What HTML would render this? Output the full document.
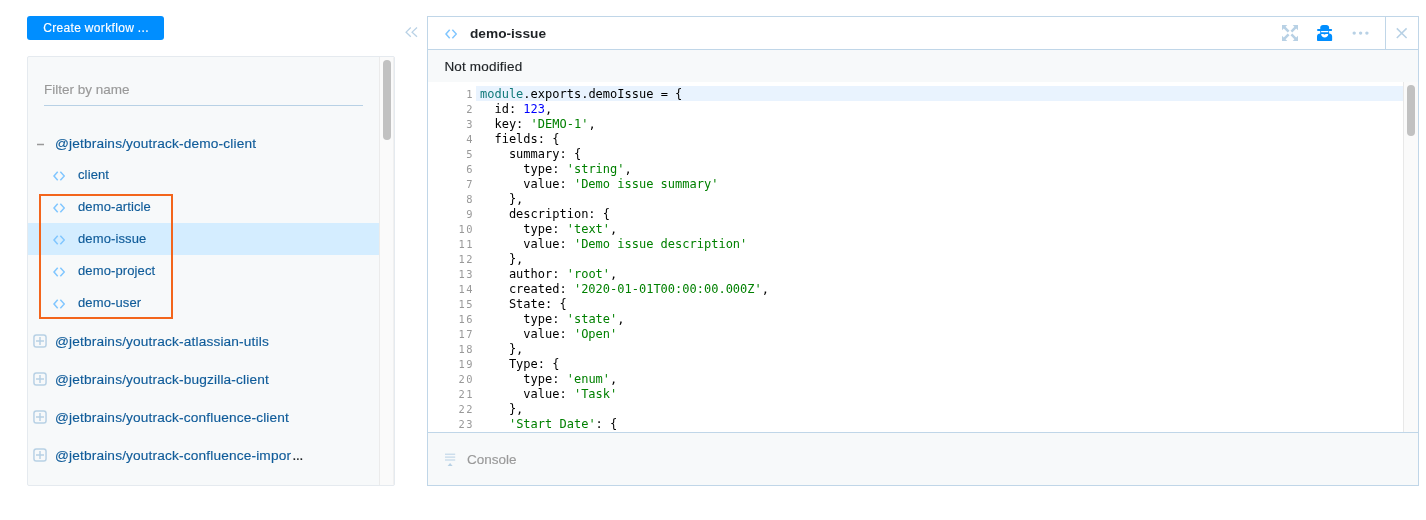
<!DOCTYPE html>
<html lang="en">
<head>
<meta charset="utf-8">
<title>Workflows</title>
<style>
*{box-sizing:border-box;margin:0;padding:0}
html,body{width:1426px;height:520px;overflow:hidden;background:#fff}
body{position:relative;font-family:"Liberation Sans",Arial,sans-serif;font-size:13px;color:#1f2326;-webkit-font-smoothing:antialiased}
.abs{position:absolute}
.btn,.filter,.t,.title,.status,.ln,.console span{will-change:transform}
.grp,.row,.status,.filter,.console,.btn{-webkit-text-stroke:.15px currentColor}
.btn{left:27px;top:16px;width:137px;height:24px;background:#008eff;border-radius:3px;color:#fff;font-size:12px;line-height:24px;text-align:center;white-space:nowrap;letter-spacing:.33px;padding-left:1px}
.side{left:27px;top:56px;width:368px;height:430px;background:#f7f9fa;border:1px solid #e5eaef;border-radius:2px;overflow:hidden}
.track{left:351px;top:0;width:15px;height:428px;background:#fafafa;border-left:1px solid #ebebeb;border-right:1px solid #f0f0f0}
.thumb{left:355px;top:3px;width:8px;height:80px;border-radius:4px;background:#c1c1c1}
.filter{left:16.3px;top:25px;font-size:13.5px;line-height:16px;color:#999;white-space:nowrap}
.uline{left:16px;top:48px;width:319px;height:1px;background:#b8d1e5}
.row{left:0;width:351px;height:32px;line-height:32px;white-space:nowrap;color:#0f5b99;font-size:13px}
.row.sel{background:#d4edff}
.row span.t{position:absolute;left:49.5px;top:0;letter-spacing:.12px}
.row svg{position:absolute;left:24.7px;top:11.7px}
.grp{left:0;width:352px;height:20px;line-height:20px;white-space:nowrap;color:#0f5b99;font-size:13.7px;letter-spacing:.15px}
.grp em{font-style:normal;color:#1f2326;font-size:15px;line-height:0;letter-spacing:-.75px;margin-left:1.2px}
.grp span.t{position:absolute;left:27.3px;top:1px}
.plus{position:absolute;left:5px;top:3px}
.minus{position:absolute;left:8px;top:9.7px}
.orange{left:39px;top:194px;width:134px;height:125px;border:2px solid #f3651c}
.ed{left:427px;top:16px;width:992px;height:470px;border:1px solid #c0d6e8;background:#fff;overflow:hidden}
.hdr{left:0;top:0;width:990px;height:33px;background:#fff;border-bottom:1px solid #c0d6e8}
.hdr .title{position:absolute;left:41.6px;top:0;line-height:34px;font-weight:bold;font-size:13.7px;color:#1f2326;white-space:nowrap}
.sep{left:957px;top:0;width:1px;height:33px;background:#c0d6e8}
.status{left:0;top:33px;width:990px;height:32px;background:#f7f9fa;line-height:34px;padding-left:16.4px;font-size:13.5px;letter-spacing:.18px;color:#1f2326;white-space:nowrap}
.code{left:0;top:65px;width:990px;height:350px;background:#fff;overflow:hidden}
.ln{height:15px;line-height:15px;white-space:pre;font-family:"DejaVu Sans Mono","Liberation Mono",monospace;font-size:12px;color:#000;position:relative}
.ln i{font-style:normal;position:absolute;left:0;width:44.5px;text-align:right;color:#999;font-size:10.4px;letter-spacing:1.5px;padding-right:0;margin-left:1.5px}
.ln b{font-weight:normal;position:absolute;left:52px}
.ln.act:before{content:"";position:absolute;left:48px;right:15px;top:-1px;height:15px;background:#e9f3fe}
.k{color:#117a7a}.s{color:#008000}.n{color:#0000ff}
.vtrack{left:975px;top:0;width:15px;height:350px;background:#fafafa;border-left:1px solid #e8e8e8}
.vthumb{left:979px;top:3px;width:8px;height:51px;border-radius:4px;background:#c1c1c1}
.console{left:0;top:415px;width:990px;height:53px;background:#f7f9fa;border-top:1px solid #c0d6e8;line-height:53px;color:#999;font-size:13.5px}
.console span{position:absolute;left:39px;top:.3px}
</style>
</head>
<body>
<div class="abs btn">Create workflow ...</div>

<div class="abs side">
  <div class="abs filter">Filter by name</div>
  <div class="abs uline"></div>

  <div class="abs grp" style="top:76px"><svg class="minus" width="9" height="3" viewBox="0 0 9 3"><path d="M1 1.5 H8" stroke="#999" stroke-width="1.4" fill="none"/></svg><span class="t">@jetbrains/youtrack-demo-client</span></div>

  <div class="abs row" style="top:102px"><svg width="12" height="10" viewBox="0 0 12 10"><path d="M4.7 0.85 L1 5 L4.7 9.15 M7.35 0.85 L11.3 5 L7.35 9.15" fill="none" stroke="#80c6ff" stroke-width="1.5"/></svg><span class="t">client</span></div>
  <div class="abs row" style="top:134px"><svg width="12" height="10" viewBox="0 0 12 10"><path d="M4.7 0.85 L1 5 L4.7 9.15 M7.35 0.85 L11.3 5 L7.35 9.15" fill="none" stroke="#80c6ff" stroke-width="1.5"/></svg><span class="t">demo-article</span></div>
  <div class="abs row sel" style="top:166px"><svg width="12" height="10" viewBox="0 0 12 10"><path d="M4.7 0.85 L1 5 L4.7 9.15 M7.35 0.85 L11.3 5 L7.35 9.15" fill="none" stroke="#80c6ff" stroke-width="1.5"/></svg><span class="t">demo-issue</span></div>
  <div class="abs row" style="top:198px"><svg width="12" height="10" viewBox="0 0 12 10"><path d="M4.7 0.85 L1 5 L4.7 9.15 M7.35 0.85 L11.3 5 L7.35 9.15" fill="none" stroke="#80c6ff" stroke-width="1.5"/></svg><span class="t">demo-project</span></div>
  <div class="abs row" style="top:230px"><svg width="12" height="10" viewBox="0 0 12 10"><path d="M4.7 0.85 L1 5 L4.7 9.15 M7.35 0.85 L11.3 5 L7.35 9.15" fill="none" stroke="#80c6ff" stroke-width="1.5"/></svg><span class="t">demo-user</span></div>

  <div class="abs grp" style="top:274px"><svg class="plus" width="14" height="14" viewBox="0 0 14 14"><rect x="0.95" y="0.95" width="12.1" height="12.1" rx="2.3" fill="none" stroke="#b8d1e5" stroke-width="1.5"/><path d="M3 7 H11 M7 3 V11" fill="none" stroke="#b8d1e5" stroke-width="1.5"/></svg><span class="t">@jetbrains/youtrack-atlassian-utils</span></div>
  <div class="abs grp" style="top:312px"><svg class="plus" width="14" height="14" viewBox="0 0 14 14"><rect x="0.95" y="0.95" width="12.1" height="12.1" rx="2.3" fill="none" stroke="#b8d1e5" stroke-width="1.5"/><path d="M3 7 H11 M7 3 V11" fill="none" stroke="#b8d1e5" stroke-width="1.5"/></svg><span class="t">@jetbrains/youtrack-bugzilla-client</span></div>
  <div class="abs grp" style="top:350px"><svg class="plus" width="14" height="14" viewBox="0 0 14 14"><rect x="0.95" y="0.95" width="12.1" height="12.1" rx="2.3" fill="none" stroke="#b8d1e5" stroke-width="1.5"/><path d="M3 7 H11 M7 3 V11" fill="none" stroke="#b8d1e5" stroke-width="1.5"/></svg><span class="t">@jetbrains/youtrack-confluence-client</span></div>
  <div class="abs grp" style="top:388px"><svg class="plus" width="14" height="14" viewBox="0 0 14 14"><rect x="0.95" y="0.95" width="12.1" height="12.1" rx="2.3" fill="none" stroke="#b8d1e5" stroke-width="1.5"/><path d="M3 7 H11 M7 3 V11" fill="none" stroke="#b8d1e5" stroke-width="1.5"/></svg><span class="t">@jetbrains/youtrack-confluence-impor<em>...</em></span></div>

  <div class="abs track"></div>
  <div class="abs thumb"></div>
</div>

<div class="abs orange"></div>

<svg class="abs" style="left:405px;top:27px" width="13" height="11" viewBox="0 0 13 11"><path d="M5.8 0.5 L1.1 5.15 L5.8 9.8 M12 0.5 L7.1 5.15 L12 9.8" fill="none" stroke="#b8d1e5" stroke-width="1.3"/></svg>

<div class="abs ed">
  <div class="abs hdr">
    <svg class="abs" style="left:17.2px;top:12.4px" width="12" height="10" viewBox="0 0 12 10"><path d="M4.7 0.85 L1 5 L4.7 9.15 M7.35 0.85 L11.3 5 L7.35 9.15" fill="none" stroke="#80c6ff" stroke-width="1.5"/></svg>
    <span class="title">demo-issue</span>

    <svg class="abs" style="left:854px;top:8px" width="16" height="16" viewBox="0 0 16 16"><g fill="#b8d1e5" stroke="none"><path d="M0 0 L5.3 0 L3.55 1.75 L7.5 5.7 L5.7 7.5 L1.75 3.55 L0 5.3 Z"/><path d="M16 0 L10.7 0 L12.4 1.75 L8.5 5.7 L10.3 7.5 L14.2 3.55 L16 5.3 Z"/><path d="M0 16 L5.3 16 L3.55 14.2 L7.5 10.3 L5.7 8.5 L1.75 12.4 L0 10.7 Z"/><path d="M16 16 L10.7 16 L12.4 14.2 L8.5 10.3 L10.3 8.5 L14.2 12.4 L16 10.7 Z"/></g></svg>
    <svg class="abs" style="left:889px;top:8px" width="16" height="16" viewBox="0 0 16 16"><g fill="#008eff"><path d="M3.25 4.5 V2.6 C3.25 1 4.4 0 6 0 H9.35 C10.95 0 12.1 1 12.1 2.6 V4.5 Z"/><rect x="0" y="4.05" width="15.15" height="1.95" rx="0.95"/><path fill-rule="evenodd" d="M3.25 5.5 H12.1 V8.6 C13.9 8.7 15.15 9.7 15.15 11.4 V15.2 C15.15 15.7 14.8 16 14.35 16 H0.8 C0.35 16 0 15.7 0 15.2 V11.4 C0 9.7 1.25 8.7 3.25 8.6 Z M4.1 6.1 H11.3 V7.2 H4.1 Z M4.15 8.95 H6.5 C6.8 9.8 8.2 9.8 8.5 8.95 H11.25 C11.25 11.1 9.6 12.4 7.7 12.4 C5.8 12.4 4.15 11.1 4.15 8.95 Z"/></g></svg>
    <svg class="abs" style="left:922px;top:12px" width="22" height="8" viewBox="0 0 22 8"><g fill="#b8d1e5"><circle cx="4.2" cy="4.1" r="1.7"/><circle cx="10.6" cy="4.1" r="1.7"/><circle cx="16.9" cy="4.1" r="1.7"/></g></svg>
    <svg class="abs" style="left:966px;top:9px" width="15" height="15" viewBox="0 0 15 15"><path d="M2.8 2.4 L12.6 12 M12.6 2.4 L2.8 12" fill="none" stroke="#b8d1e5" stroke-width="1.5"/></svg>
    <div class="abs sep"></div>
  </div>
  <div class="abs status">Not modified</div>
  <div class="abs code">
    <div style="height:5px"></div>
<div class="ln act"><i>1</i><b><span class="k">module</span>.exports.demoIssue = {</b></div>
<div class="ln"><i>2</i><b>  id: <span class="n">123</span>,</b></div>
<div class="ln"><i>3</i><b>  key: <span class="s">'DEMO-1'</span>,</b></div>
<div class="ln"><i>4</i><b>  fields: {</b></div>
<div class="ln"><i>5</i><b>    summary: {</b></div>
<div class="ln"><i>6</i><b>      type: <span class="s">'string'</span>,</b></div>
<div class="ln"><i>7</i><b>      value: <span class="s">'Demo issue summary'</span></b></div>
<div class="ln"><i>8</i><b>    },</b></div>
<div class="ln"><i>9</i><b>    description: {</b></div>
<div class="ln"><i>10</i><b>      type: <span class="s">'text'</span>,</b></div>
<div class="ln"><i>11</i><b>      value: <span class="s">'Demo issue description'</span></b></div>
<div class="ln"><i>12</i><b>    },</b></div>
<div class="ln"><i>13</i><b>    author: <span class="s">'root'</span>,</b></div>
<div class="ln"><i>14</i><b>    created: <span class="s">'2020-01-01T00:00:00.000Z'</span>,</b></div>
<div class="ln"><i>15</i><b>    State: {</b></div>
<div class="ln"><i>16</i><b>      type: <span class="s">'state'</span>,</b></div>
<div class="ln"><i>17</i><b>      value: <span class="s">'Open'</span></b></div>
<div class="ln"><i>18</i><b>    },</b></div>
<div class="ln"><i>19</i><b>    Type: {</b></div>
<div class="ln"><i>20</i><b>      type: <span class="s">'enum'</span>,</b></div>
<div class="ln"><i>21</i><b>      value: <span class="s">'Task'</span></b></div>
<div class="ln"><i>22</i><b>    },</b></div>
<div class="ln"><i>23</i><b>    <span class="s">'Start Date'</span>: {</b></div>
    <div class="abs vtrack"></div>
    <div class="abs vthumb"></div>
  </div>
  <div class="abs console"><svg class="abs" style="left:16px;top:18px" width="13" height="16" viewBox="0 0 13 16"><path d="M1 3.2 H11.2 M1 6.1 H11.2 M1 9 H11.2" stroke="#b8d1e5" stroke-width="1" fill="none"/><path d="M3.6 14.9 L6.1 12 L8.6 14.9 Z" fill="#b8d1e5"/></svg><span>Console</span></div>
</div>
</body>
</html>
